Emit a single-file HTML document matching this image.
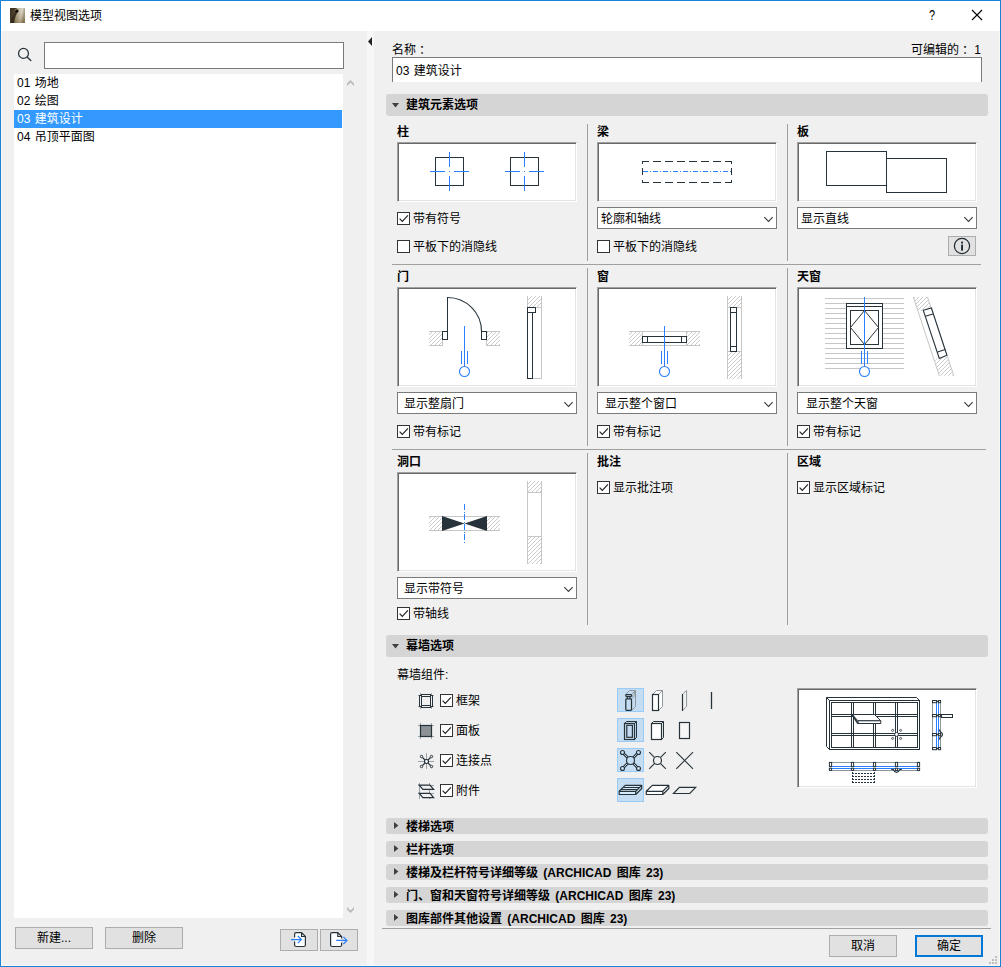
<!DOCTYPE html>
<html lang="zh-CN">
<head>
<meta charset="utf-8">
<title>模型视图选项</title>
<style>
*{box-sizing:border-box;margin:0;padding:0}
html,body{width:1001px;height:967px;overflow:hidden;background:#f0f0f0}
body{font-family:"Liberation Sans","Noto Sans CJK SC",sans-serif;font-size:12px;color:#000;position:relative;line-height:16px}
div,svg{position:absolute}
#frame{left:0;top:0;width:1001px;height:967px;border:1px solid #1883d7;z-index:50}
#title{left:1px;top:1px;width:999px;height:30px;background:#fff}
.t{white-space:nowrap;height:16px;line-height:16px}
.li{word-spacing:1px}
.fc{position:relative;left:3px}
.b{font-weight:bold}
.hdr{background:#d5d5d5;border-radius:3px;left:386px;width:602px}
.pv{background:#fff;border:1px solid;border-color:#a0a0a0 #fff #fff #a0a0a0;box-shadow:inset 1px 1px 0 #696969,inset -1px -1px 0 #e3e3e3;width:180px;overflow:hidden}
.cb{width:13px;height:13px;border:1px solid #333;background:#fff}
.dd{background:#fff;border:1px solid #7a7a7a;height:22px;width:180px}
.btn{background:#e1e1e1;border:1px solid #adadad;text-align:center}
.vs{width:1px;background:#a0a0a0}
.hs{height:1px;background:#a0a0a0}
</style>
</head>
<body>
<!-- TITLE BAR -->
<div id="title"></div>
<svg style="left:10px;top:8px" width="15" height="15" viewBox="0 0 15 15"><defs><linearGradient id="ig" x1="0" y1="0" x2="1" y2="0.15"><stop offset="0" stop-color="#3d321f"/><stop offset=".35" stop-color="#7a6a48"/><stop offset=".62" stop-color="#b9ad92"/><stop offset=".8" stop-color="#d6cdbb"/><stop offset="1" stop-color="#8f8163"/></linearGradient><linearGradient id="ig2" x1="0" y1="0" x2="0" y2="1"><stop offset="0" stop-color="#fff" stop-opacity=".25"/><stop offset="1" stop-color="#6a5628" stop-opacity=".45"/></linearGradient></defs><rect width="15" height="15" fill="url(#ig)"/><rect width="15" height="15" fill="url(#ig2)"/><path d="M0 0L7 0C3.5 2.5 1.2 8 0 14Z" fill="#3a2f1e" opacity=".9"/><path d="M0 15C1.2 8.5 3.5 3.5 6.6 1.6L8.6 3.2C6 6 4.6 10 4.2 15Z" fill="#2b2217" opacity=".85"/><path d="M5.5 2.6a1.6 1.3 -30 1 0 2.8 1a1.6 1.3 -30 1 0 -2.8 -1" fill="#120d08"/></svg>
<div class="t" style="left:30px;top:8px">模型视图选项</div>
<div class="t" style="left:929px;top:7px;font-size:14px;transform:scaleX(.78);transform-origin:0 0">?</div>
<svg style="left:971px;top:9px" width="12" height="12" viewBox="0 0 12 12"><path d="M1 1 L11 11 M11 1 L1 11" stroke="#000" stroke-width="1.1" fill="none"/></svg>

<!-- LEFT PANEL -->
<svg style="left:12px;top:40px" width="30" height="30" viewBox="12 40 30 30" fill="none"><circle cx="23.5" cy="53.4" r="4.95" stroke="#27333b" stroke-width="1.25"/><path d="M27.3 57.3L30.8 60.6" stroke="#27333b" stroke-width="1.35" stroke-linecap="round"/></svg>
<div style="left:44px;top:42px;width:300px;height:27px;background:#fff;border:1px solid #7a7a7a"></div>
<div style="left:14px;top:74px;width:329px;height:844px;background:#fff"></div>
<div class="t li" style="left:17px;top:75px">01 场地</div>
<div class="t li" style="left:17px;top:93px">02 绘图</div>
<div style="left:14px;top:110px;width:328px;height:18px;background:#3399ff"></div>
<div class="t li" style="left:17px;top:111px;color:#fff">03 建筑设计</div>
<div class="t li" style="left:17px;top:129px">04 吊顶平面图</div>
<svg style="left:346px;top:79px" width="9" height="8" viewBox="346 79 9 8"><path d="M347 83.6L350.5 80.1L354 83.6L354 86L350.5 82.5L347 86Z" fill="#b9b9b9"/></svg>
<svg style="left:346px;top:906px" width="9" height="8" viewBox="346 906 9 8"><path d="M347 909.4L350.5 912.9L354 909.4L354 907L350.5 910.5L347 907Z" fill="#b9b9b9"/></svg>
<div class="btn t" style="left:15px;top:927px;width:78px;height:22px;line-height:20px">新建...</div>
<div class="btn t" style="left:105px;top:927px;width:78px;height:22px;line-height:20px">删除</div>
<div class="btn" style="left:280px;top:929px;width:38px;height:22px"><svg style="left:-1px;top:-1px" width="38" height="22" viewBox="280 929 38 22" fill="none"><path d="M294.6 937.6L294.6 934.2Q294.6 932.7 296.1 932.7L301.6 932.7L305.4 936.5L305.4 945Q305.4 946.5 303.9 946.5L296.1 946.5Q294.6 946.5 294.6 945L294.6 941.6Z" fill="#fff"/><path d="M294.6 937.6L294.6 934.2Q294.6 932.7 296.1 932.7L301.6 932.7L305.4 936.5L305.4 945Q305.4 946.5 303.9 946.5L296.1 946.5Q294.6 946.5 294.6 945L294.6 941.6M301.6 932.7L301.6 936.5L305.4 936.5" stroke="#27333b" stroke-width="1.2"/><path d="M291 939.6L301.2 939.6M297.8 936L301.4 939.6L297.8 943.2" stroke="#2a7fff" stroke-width="1.2"/></svg></div>
<div class="btn" style="left:320px;top:929px;width:38px;height:22px"><svg style="left:-1px;top:-1px" width="38" height="22" viewBox="320 929 38 22" fill="none"><path d="M341.6 938.4L341.6 936.5L337.8 932.7L332.1 932.7Q330.6 932.7 330.6 934.2L330.6 945Q330.6 946.5 332.1 946.5L340.1 946.5Q341.6 946.5 341.6 945L341.6 942.4Z" fill="#fff"/><path d="M341.6 938.4L341.6 936.5L337.8 932.7L332.1 932.7Q330.6 932.7 330.6 934.2L330.6 945Q330.6 946.5 332.1 946.5L340.1 946.5Q341.6 946.5 341.6 945L341.6 942.4M337.8 932.7L337.8 936.5L341.6 936.5" stroke="#27333b" stroke-width="1.2"/><path d="M336.2 940.4L346.8 940.4M343.4 936.8L347 940.4L343.4 944" stroke="#2a7fff" stroke-width="1.2"/></svg></div>

<!-- SPLITTER -->
<div style="left:367px;top:31px;width:7px;height:935px;background:#f7f7f7"></div>
<svg style="left:367px;top:36px" width="6" height="11" viewBox="0 0 6 11"><path d="M5 1 L5 10 L1 5.5 Z" fill="#222"/></svg>

<!-- RIGHT PANEL -->

<svg width="0" height="0" style="left:0;top:0"><defs>
<pattern id="hat" width="4" height="4" patternUnits="userSpaceOnUse"><path d="M-1 1L1 -1M0 4L4 0M3 5L5 3" stroke="#c6c6c6" stroke-width=".9" fill="none"/></pattern>
</defs></svg>

<div class="t" style="left:392px;top:42px">名称<span class="fc">：</span></div>
<div class="t" style="left:909px;top:42px;width:72px;text-align:right">可编辑的<span class="fc">：</span> 1</div>
<div style="left:392px;top:57px;width:590px;height:25px;background:#fff;border:1px solid #7a7a7a;border-bottom:none"></div>
<div class="t" style="left:396px;top:63px;word-spacing:1px">03 建筑设计</div>

<!-- SECTION 1 -->
<div class="hdr" style="top:94px;height:22px"></div>
<svg style="left:392px;top:103px" width="7" height="5" viewBox="0 0 7 5"><path d="M0 0L7 0L3.5 4.5Z" fill="#404040"/></svg>
<div class="t b" style="left:406px;top:97px">建筑元素选项</div>

<div class="hs" style="left:392px;top:264px;width:589px"></div>
<div class="hs" style="left:392px;top:449px;width:594px"></div>
<div class="vs" style="left:587px;top:124px;height:137px"></div>
<div class="vs" style="left:587px;top:268px;height:178px"></div>
<div class="vs" style="left:587px;top:453px;height:172px"></div>
<div class="vs" style="left:787px;top:124px;height:137px"></div>
<div class="vs" style="left:787px;top:268px;height:178px"></div>
<div class="vs" style="left:787px;top:453px;height:172px"></div>

<!-- row 1 -->
<div class="t b" style="left:397px;top:124px">柱</div>
<div class="pv" id="pv1" style="left:397px;top:142px;height:60px"><svg style="left:0;top:0" width="178" height="58" viewBox="398 143 178 58" fill="none" ><rect x="435.5" y="157.5" width="28" height="28" stroke="#27333b" fill="none" stroke-width="1" shape-rendering="crispEdges"/><path d="M449.5 152L449.5 167" stroke="#2a7fff" stroke-width="1" shape-rendering="crispEdges"/><path d="M449.5 176L449.5 191" stroke="#2a7fff" stroke-width="1" shape-rendering="crispEdges"/><path d="M430 171.5L445 171.5" stroke="#2a7fff" stroke-width="1" shape-rendering="crispEdges"/><path d="M454 171.5L469 171.5" stroke="#2a7fff" stroke-width="1" shape-rendering="crispEdges"/><rect x="449" y="171" width="1" height="1" fill="#2a7fff" shape-rendering="crispEdges"/><rect x="510.5" y="157.5" width="28" height="28" stroke="#27333b" fill="none" stroke-width="1" shape-rendering="crispEdges"/><path d="M524.5 152L524.5 167" stroke="#2a7fff" stroke-width="1" shape-rendering="crispEdges"/><path d="M524.5 176L524.5 191" stroke="#2a7fff" stroke-width="1" shape-rendering="crispEdges"/><path d="M505 171.5L520 171.5" stroke="#2a7fff" stroke-width="1" shape-rendering="crispEdges"/><path d="M529 171.5L544 171.5" stroke="#2a7fff" stroke-width="1" shape-rendering="crispEdges"/><rect x="524" y="171" width="1" height="1" fill="#2a7fff" shape-rendering="crispEdges"/></svg></div>
<div class="cb" style="left:397px;top:212px"><svg width="13" height="13" viewBox="0 0 13 13" style="left:-1px;top:-1px"><path d="M2.6 6.6L5.3 9.4L10.9 3.4" fill="none" stroke="#222" stroke-width="1.15"/></svg></div>
<div class="t" style="left:413px;top:211px">带有符号</div>
<div class="cb" style="left:397px;top:240px"></div>
<div class="t" style="left:413px;top:239px">平板下的消隐线</div>

<div class="t b" style="left:597px;top:124px">梁</div>
<div class="pv" id="pv2" style="left:597px;top:142px;height:60px"><svg style="left:0;top:0" width="178" height="58" viewBox="598 143 178 58" fill="none" ><path d="M642 161.5L732 161.5" stroke="#27333b" stroke-width="1" shape-rendering="crispEdges" stroke-dasharray="8 4" stroke-dashoffset="1"/><path d="M642 182.5L732 182.5" stroke="#27333b" stroke-width="1" shape-rendering="crispEdges" stroke-dasharray="8 4" stroke-dashoffset="1"/><path d="M642.5 161L642.5 164" stroke="#27333b" stroke-width="1" shape-rendering="crispEdges"/><path d="M642.5 168L642.5 175" stroke="#27333b" stroke-width="1" shape-rendering="crispEdges"/><path d="M642.5 180L642.5 183" stroke="#27333b" stroke-width="1" shape-rendering="crispEdges"/><path d="M731.5 161L731.5 164" stroke="#27333b" stroke-width="1" shape-rendering="crispEdges"/><path d="M731.5 168L731.5 175" stroke="#27333b" stroke-width="1" shape-rendering="crispEdges"/><path d="M731.5 180L731.5 183" stroke="#27333b" stroke-width="1" shape-rendering="crispEdges"/><path d="M643 171.5L731 171.5" stroke="#2a7fff" stroke-width="1" shape-rendering="crispEdges" stroke-dasharray="5 2 1 2"/></svg></div>
<div class="dd" style="left:597px;top:207px"><div class="t" style="left:3px;top:3px">轮廓和轴线</div><svg width="11" height="7" viewBox="0 0 11 7" style="left:165px;top:8px"><path d="M1.3 1.2L5.5 5.4L9.7 1.2" fill="none" stroke="#3a3a3a" stroke-width="1.1"/></svg></div>
<div class="cb" style="left:597px;top:240px"></div>
<div class="t" style="left:613px;top:239px">平板下的消隐线</div>

<div class="t b" style="left:797px;top:124px">板</div>
<div class="pv" id="pv3" style="left:797px;top:142px;height:60px"><svg style="left:0;top:0" width="178" height="58" viewBox="798 143 178 58" fill="none" ><rect x="826.5" y="151.5" width="60" height="34" stroke="#27333b" fill="none" stroke-width="1" shape-rendering="crispEdges"/><rect x="886.5" y="158.5" width="60" height="34" stroke="#27333b" fill="none" stroke-width="1" shape-rendering="crispEdges"/></svg></div>
<div class="dd" style="left:797px;top:207px"><div class="t" style="left:3px;top:3px">显示直线</div><svg width="11" height="7" viewBox="0 0 11 7" style="left:165px;top:8px"><path d="M1.3 1.2L5.5 5.4L9.7 1.2" fill="none" stroke="#3a3a3a" stroke-width="1.1"/></svg></div>
<div class="btn" style="left:948px;top:236px;width:28px;height:20px"><svg width="18" height="18" viewBox="0 0 18 18" style="left:4px;top:0px"><circle cx="9" cy="9" r="7.6" fill="none" stroke="#1d2a33" stroke-width="1.2"/><rect x="8.1" y="7.6" width="1.9" height="6" fill="#1d2a33"/><rect x="8.1" y="4.6" width="1.9" height="1.9" fill="#1d2a33"/></svg></div>

<!-- row 2 -->
<div class="t b" style="left:397px;top:269px">门</div>
<div class="pv" id="pv4" style="left:397px;top:287px;height:100px"><svg style="left:0;top:0" width="178" height="98" viewBox="398 288 178 98" fill="none" ><rect x="429" y="331" width="14" height="15" fill="url(#hat)"/><rect x="486" y="331" width="14" height="15" fill="url(#hat)"/><path d="M429 331.5L443 331.5" stroke="#c6c6c6" stroke-width="1" shape-rendering="crispEdges"/><path d="M486 331.5L500 331.5" stroke="#c6c6c6" stroke-width="1" shape-rendering="crispEdges"/><path d="M429 345.5L443 345.5" stroke="#c6c6c6" stroke-width="1" shape-rendering="crispEdges"/><path d="M486 345.5L500 345.5" stroke="#c6c6c6" stroke-width="1" shape-rendering="crispEdges"/><path d="M442.5 339L442.5 346" stroke="#c6c6c6" stroke-width="1" shape-rendering="crispEdges"/><path d="M486.5 339L486.5 346" stroke="#c6c6c6" stroke-width="1" shape-rendering="crispEdges"/><rect x="442.5" y="331.5" width="5" height="8" stroke="#27333b" fill="#fff" stroke-width="1" shape-rendering="crispEdges"/><rect x="481.5" y="331.5" width="5" height="8" stroke="#27333b" fill="#fff" stroke-width="1" shape-rendering="crispEdges"/><path d="M447.5 297L447.5 331" stroke="#27333b" stroke-width="1" shape-rendering="crispEdges"/><path d="M447.5 297.5A34 34 0 0 1 481.5 331.5" stroke="#27333b" stroke-width="1.1"/><path d="M464.5 326L464.5 366" stroke="#2a7fff" stroke-width="1" shape-rendering="crispEdges"/><path d="M461.5 351L461.5 364" stroke="#2a7fff" stroke-width="1" shape-rendering="crispEdges"/><path d="M467.5 351L467.5 364" stroke="#2a7fff" stroke-width="1" shape-rendering="crispEdges"/><circle cx="464.5" cy="371.5" r="5" stroke="#2a7fff" stroke-width="1.1" fill="#fff"/><rect x="527" y="296" width="15" height="11.5" fill="url(#hat)"/><path d="M527.5 296L527.5 308" stroke="#c6c6c6" stroke-width="1" shape-rendering="crispEdges"/><path d="M541.5 296L541.5 379" stroke="#c6c6c6" stroke-width="1" shape-rendering="crispEdges"/><path d="M532 378.5L542 378.5" stroke="#c6c6c6" stroke-width="1" shape-rendering="crispEdges"/><path d="M535 307.5L542 307.5" stroke="#c6c6c6" stroke-width="1" shape-rendering="crispEdges"/><rect x="527.5" y="312.5" width="5" height="66" stroke="#27333b" fill="#fff" stroke-width="1" shape-rendering="crispEdges"/><rect x="527.5" y="307.5" width="8" height="5" stroke="#27333b" fill="#fff" stroke-width="1" shape-rendering="crispEdges"/></svg></div>
<div class="dd" style="left:397px;top:392px"><div class="t" style="left:6px;top:3px">显示整扇门</div><svg width="11" height="7" viewBox="0 0 11 7" style="left:165px;top:8px"><path d="M1.3 1.2L5.5 5.4L9.7 1.2" fill="none" stroke="#3a3a3a" stroke-width="1.1"/></svg></div>
<div class="cb" style="left:397px;top:425px"><svg width="13" height="13" viewBox="0 0 13 13" style="left:-1px;top:-1px"><path d="M2.6 6.6L5.3 9.4L10.9 3.4" fill="none" stroke="#222" stroke-width="1.15"/></svg></div>
<div class="t" style="left:413px;top:424px">带有标记</div>

<div class="t b" style="left:597px;top:269px">窗</div>
<div class="pv" id="pv5" style="left:597px;top:287px;height:100px"><svg style="left:0;top:0" width="178" height="98" viewBox="598 288 178 98" fill="none" ><rect x="629" y="331" width="13" height="15" fill="url(#hat)"/><rect x="687" y="331" width="13" height="15" fill="url(#hat)"/><path d="M629 331.5L700 331.5" stroke="#c6c6c6" stroke-width="1" shape-rendering="crispEdges"/><path d="M629 345.5L700 345.5" stroke="#c6c6c6" stroke-width="1" shape-rendering="crispEdges"/><path d="M642.5 331L642.5 346" stroke="#c6c6c6" stroke-width="1" shape-rendering="crispEdges"/><path d="M686.5 331L686.5 346" stroke="#c6c6c6" stroke-width="1" shape-rendering="crispEdges"/><rect x="642.5" y="336.5" width="44" height="6" stroke="#27333b" fill="#fff" stroke-width="1" shape-rendering="crispEdges"/><path d="M647.5 336L647.5 343" stroke="#27333b" stroke-width="1" shape-rendering="crispEdges"/><path d="M681.5 336L681.5 343" stroke="#27333b" stroke-width="1" shape-rendering="crispEdges"/><path d="M664.5 326L664.5 366" stroke="#2a7fff" stroke-width="1" shape-rendering="crispEdges"/><path d="M661.5 351L661.5 364" stroke="#2a7fff" stroke-width="1" shape-rendering="crispEdges"/><path d="M667.5 351L667.5 364" stroke="#2a7fff" stroke-width="1" shape-rendering="crispEdges"/><circle cx="664.5" cy="371.5" r="5" stroke="#2a7fff" stroke-width="1.1" fill="#fff"/><rect x="727" y="296" width="15" height="11.5" fill="url(#hat)"/><rect x="727" y="352" width="15" height="27" fill="url(#hat)"/><path d="M727.5 296L727.5 379" stroke="#c6c6c6" stroke-width="1" shape-rendering="crispEdges"/><path d="M741.5 296L741.5 379" stroke="#c6c6c6" stroke-width="1" shape-rendering="crispEdges"/><path d="M727 307.5L742 307.5" stroke="#c6c6c6" stroke-width="1" shape-rendering="crispEdges"/><path d="M727 351.5L742 351.5" stroke="#c6c6c6" stroke-width="1" shape-rendering="crispEdges"/><rect x="730.5" y="307.5" width="6" height="44" stroke="#27333b" fill="#fff" stroke-width="1" shape-rendering="crispEdges"/><path d="M730 312.5L737 312.5" stroke="#27333b" stroke-width="1" shape-rendering="crispEdges"/><path d="M730 346.5L737 346.5" stroke="#27333b" stroke-width="1" shape-rendering="crispEdges"/></svg></div>
<div class="dd" style="left:597px;top:392px"><div class="t" style="left:7px;top:3px">显示整个窗口</div><svg width="11" height="7" viewBox="0 0 11 7" style="left:165px;top:8px"><path d="M1.3 1.2L5.5 5.4L9.7 1.2" fill="none" stroke="#3a3a3a" stroke-width="1.1"/></svg></div>
<div class="cb" style="left:597px;top:425px"><svg width="13" height="13" viewBox="0 0 13 13" style="left:-1px;top:-1px"><path d="M2.6 6.6L5.3 9.4L10.9 3.4" fill="none" stroke="#222" stroke-width="1.15"/></svg></div>
<div class="t" style="left:613px;top:424px">带有标记</div>

<div class="t b" style="left:797px;top:269px">天窗</div>
<div class="pv" id="pv6" style="left:797px;top:287px;height:100px"><svg style="left:0;top:0" width="178" height="98" viewBox="798 288 178 98" fill="none" ><path d="M825 298.5L904 298.5" stroke="#c6c6c6" stroke-width="1" shape-rendering="crispEdges"/><path d="M825 303.5L904 303.5" stroke="#c6c6c6" stroke-width="1" shape-rendering="crispEdges"/><path d="M825 308.5L904 308.5" stroke="#c6c6c6" stroke-width="1" shape-rendering="crispEdges"/><path d="M825 313.5L904 313.5" stroke="#c6c6c6" stroke-width="1" shape-rendering="crispEdges"/><path d="M825 318.5L904 318.5" stroke="#c6c6c6" stroke-width="1" shape-rendering="crispEdges"/><path d="M825 323.5L904 323.5" stroke="#c6c6c6" stroke-width="1" shape-rendering="crispEdges"/><path d="M825 328.5L904 328.5" stroke="#c6c6c6" stroke-width="1" shape-rendering="crispEdges"/><path d="M825 333.5L904 333.5" stroke="#c6c6c6" stroke-width="1" shape-rendering="crispEdges"/><path d="M825 338.5L904 338.5" stroke="#c6c6c6" stroke-width="1" shape-rendering="crispEdges"/><path d="M825 343.5L904 343.5" stroke="#c6c6c6" stroke-width="1" shape-rendering="crispEdges"/><path d="M825 348.5L904 348.5" stroke="#c6c6c6" stroke-width="1" shape-rendering="crispEdges"/><path d="M825 353.5L904 353.5" stroke="#c6c6c6" stroke-width="1" shape-rendering="crispEdges"/><path d="M825 358.5L904 358.5" stroke="#c6c6c6" stroke-width="1" shape-rendering="crispEdges"/><path d="M825 363.5L904 363.5" stroke="#c6c6c6" stroke-width="1" shape-rendering="crispEdges"/><path d="M825 368.5L904 368.5" stroke="#c6c6c6" stroke-width="1" shape-rendering="crispEdges"/><rect x="846.5" y="303.5" width="36" height="45" stroke="#27333b" fill="#fff" stroke-width="1" shape-rendering="crispEdges"/><path d="M846 306.5L883 306.5" stroke="#27333b" stroke-width="1" shape-rendering="crispEdges"/><rect x="850.5" y="310.5" width="28" height="34" stroke="#27333b" fill="none" stroke-width="1" shape-rendering="crispEdges"/><path d="M864.5 310.5L878.5 327.5L864.5 344.5L850.5 327.5Z" stroke="#27333b" stroke-width="1"/><path d="M864.5 297L864.5 366" stroke="#2a7fff" stroke-width="1" shape-rendering="crispEdges"/><path d="M861.5 351L861.5 364" stroke="#2a7fff" stroke-width="1" shape-rendering="crispEdges"/><path d="M867.5 351L867.5 364" stroke="#2a7fff" stroke-width="1" shape-rendering="crispEdges"/><circle cx="864.5" cy="371.5" r="5" stroke="#2a7fff" stroke-width="1.1" fill="#fff"/><clipPath id="sk1"><path d="M913.3 297L927.5 297L931.2 308L918.7 311.8Z"/></clipPath><clipPath id="sk2"><path d="M935 359.7L947.2 355.6L953.8 375.7L939.3 375.7Z"/></clipPath><rect x="910" y="295" width="50" height="85" fill="url(#hat)" clip-path="url(#sk1)"/><rect x="910" y="295" width="50" height="85" fill="url(#hat)" clip-path="url(#sk2)"/><path d="M913.3 297L939.3 375.7" stroke="#c6c6c6" stroke-width="1" /><path d="M927.5 297L953.8 375.7" stroke="#c6c6c6" stroke-width="1" /><path d="M923.3 310.3L931.4 308L946.9 355.3L939.3 358.5Z" stroke="#27333b" stroke-width="1.1" fill="#fff"/><path d="M925.3 316.3L932.9 314" stroke="#27333b" stroke-width="1.1" /><path d="M937.6 352L945.2 349.6" stroke="#27333b" stroke-width="1.1" /></svg></div>
<div class="dd" style="left:797px;top:392px"><div class="t" style="left:8px;top:3px">显示整个天窗</div><svg width="11" height="7" viewBox="0 0 11 7" style="left:165px;top:8px"><path d="M1.3 1.2L5.5 5.4L9.7 1.2" fill="none" stroke="#3a3a3a" stroke-width="1.1"/></svg></div>
<div class="cb" style="left:797px;top:425px"><svg width="13" height="13" viewBox="0 0 13 13" style="left:-1px;top:-1px"><path d="M2.6 6.6L5.3 9.4L10.9 3.4" fill="none" stroke="#222" stroke-width="1.15"/></svg></div>
<div class="t" style="left:813px;top:424px">带有标记</div>

<!-- row 3 -->
<div class="t b" style="left:397px;top:454px">洞口</div>
<div class="pv" id="pv7" style="left:397px;top:472px;height:100px"><svg style="left:0;top:0" width="178" height="98" viewBox="398 473 178 98" fill="none" ><rect x="429" y="516" width="13" height="15" fill="url(#hat)"/><rect x="487" y="516" width="13" height="15" fill="url(#hat)"/><path d="M429 516.5L500 516.5" stroke="#c6c6c6" stroke-width="1" shape-rendering="crispEdges"/><path d="M429 530.5L500 530.5" stroke="#c6c6c6" stroke-width="1" shape-rendering="crispEdges"/><path d="M442 516L464.5 523.5L442 531ZM487 516L464.5 523.5L487 531Z" fill="#27333b"/><path d="M464.5 504L464.5 543" stroke="#2a7fff" stroke-width="1" shape-rendering="crispEdges" stroke-dasharray="6 1.5 1 1.5"/><rect x="527" y="481" width="15" height="11.5" fill="url(#hat)"/><rect x="527" y="537" width="15" height="27" fill="url(#hat)"/><path d="M527.5 481L527.5 564" stroke="#c6c6c6" stroke-width="1" shape-rendering="crispEdges"/><path d="M541.5 481L541.5 564" stroke="#c6c6c6" stroke-width="1" shape-rendering="crispEdges"/><path d="M527 492.5L542 492.5" stroke="#c6c6c6" stroke-width="1" shape-rendering="crispEdges"/><path d="M527 536.5L542 536.5" stroke="#c6c6c6" stroke-width="1" shape-rendering="crispEdges"/></svg></div>
<div class="dd" style="left:397px;top:577px"><div class="t" style="left:6px;top:3px">显示带符号</div><svg width="11" height="7" viewBox="0 0 11 7" style="left:165px;top:8px"><path d="M1.3 1.2L5.5 5.4L9.7 1.2" fill="none" stroke="#3a3a3a" stroke-width="1.1"/></svg></div>
<div class="cb" style="left:397px;top:607px"><svg width="13" height="13" viewBox="0 0 13 13" style="left:-1px;top:-1px"><path d="M2.6 6.6L5.3 9.4L10.9 3.4" fill="none" stroke="#222" stroke-width="1.15"/></svg></div>
<div class="t" style="left:413px;top:606px">带轴线</div>

<div class="t b" style="left:597px;top:454px">批注</div>
<div class="cb" style="left:597px;top:481px"><svg width="13" height="13" viewBox="0 0 13 13" style="left:-1px;top:-1px"><path d="M2.6 6.6L5.3 9.4L10.9 3.4" fill="none" stroke="#222" stroke-width="1.15"/></svg></div>
<div class="t" style="left:613px;top:480px">显示批注项</div>

<div class="t b" style="left:797px;top:454px">区域</div>
<div class="cb" style="left:797px;top:481px"><svg width="13" height="13" viewBox="0 0 13 13" style="left:-1px;top:-1px"><path d="M2.6 6.6L5.3 9.4L10.9 3.4" fill="none" stroke="#222" stroke-width="1.15"/></svg></div>
<div class="t" style="left:813px;top:480px">显示区域标记</div>

<!-- SECTION 2 -->
<div class="hdr" style="top:635px;height:22px"></div>
<svg style="left:392px;top:644px" width="7" height="5" viewBox="0 0 7 5"><path d="M0 0L7 0L3.5 4.5Z" fill="#404040"/></svg>
<div class="t b" style="left:406px;top:638px">幕墙选项</div>
<div class="t" style="left:397px;top:667px">幕墙组件:</div>

<div class="cb" style="left:440px;top:694px"><svg width="13" height="13" viewBox="0 0 13 13" style="left:-1px;top:-1px"><path d="M2.6 6.6L5.3 9.4L10.9 3.4" fill="none" stroke="#222" stroke-width="1.15"/></svg></div>
<div class="t" style="left:456px;top:693px">框架</div>
<div class="cb" style="left:440px;top:724px"><svg width="13" height="13" viewBox="0 0 13 13" style="left:-1px;top:-1px"><path d="M2.6 6.6L5.3 9.4L10.9 3.4" fill="none" stroke="#222" stroke-width="1.15"/></svg></div>
<div class="t" style="left:456px;top:723px">面板</div>
<div class="cb" style="left:440px;top:754px"><svg width="13" height="13" viewBox="0 0 13 13" style="left:-1px;top:-1px"><path d="M2.6 6.6L5.3 9.4L10.9 3.4" fill="none" stroke="#222" stroke-width="1.15"/></svg></div>
<div class="t" style="left:456px;top:753px">连接点</div>
<div class="cb" style="left:440px;top:784px"><svg width="13" height="13" viewBox="0 0 13 13" style="left:-1px;top:-1px"><path d="M2.6 6.6L5.3 9.4L10.9 3.4" fill="none" stroke="#222" stroke-width="1.15"/></svg></div>
<div class="t" style="left:456px;top:783px">附件</div>

<div style="left:617px;top:688px;width:27px;height:24px;background:#c5ddf2;border:1px solid #99cbf5"></div>
<div style="left:617px;top:718px;width:27px;height:24px;background:#c5ddf2;border:1px solid #99cbf5"></div>
<div style="left:617px;top:748px;width:27px;height:24px;background:#c5ddf2;border:1px solid #99cbf5"></div>
<div style="left:617px;top:778px;width:27px;height:24px;background:#c5ddf2;border:1px solid #99cbf5"></div>
<svg style="left:414px;top:688px" width="24" height="120" viewBox="414 688 24 120" fill="none"><path d="M420.5 693L420.5 709" stroke="#9aa1a6" stroke-width="1" shape-rendering="crispEdges"/><path d="M431.5 693L431.5 709" stroke="#9aa1a6" stroke-width="1" shape-rendering="crispEdges"/><path d="M418 695.5L434 695.5" stroke="#9aa1a6" stroke-width="1" shape-rendering="crispEdges"/><path d="M418 706.5L434 706.5" stroke="#9aa1a6" stroke-width="1" shape-rendering="crispEdges"/><rect x="421.5" y="694.5" width="9" height="2" stroke="#27333b" fill="#f0f0f0" stroke-width="1" /><rect x="421.5" y="705.5" width="9" height="2" stroke="#27333b" fill="#f0f0f0" stroke-width="1" /><rect x="419.5" y="695.5" width="2" height="11" stroke="#27333b" fill="#f0f0f0" stroke-width="1" /><rect x="430.5" y="695.5" width="2" height="11" stroke="#27333b" fill="#f0f0f0" stroke-width="1" /><path d="M420.5 723L420.5 739" stroke="#9aa1a6" stroke-width="1" shape-rendering="crispEdges"/><path d="M431.5 723L431.5 739" stroke="#9aa1a6" stroke-width="1" shape-rendering="crispEdges"/><path d="M418 725.5L434 725.5" stroke="#9aa1a6" stroke-width="1" shape-rendering="crispEdges"/><path d="M418 736.5L434 736.5" stroke="#9aa1a6" stroke-width="1" shape-rendering="crispEdges"/><rect x="420.5" y="725.5" width="11" height="11" stroke="#27333b" fill="#8c9296" stroke-width="1.2" /><path d="M418 761.5L434 761.5" stroke="#9aa1a6" stroke-width="1" shape-rendering="crispEdges"/><path d="M426.5 753L426.5 769" stroke="#9aa1a6" stroke-width="1" shape-rendering="crispEdges"/><path d="M426.5 761.5L422.5 757.5" stroke="#27333b" stroke-width="1.2" /><circle cx="421.5" cy="756.5" r="1.2" fill="#f0f0f0" stroke="#27333b" stroke-width="1"/><path d="M426.5 761.5L422.5 765.5" stroke="#27333b" stroke-width="1.2" /><circle cx="421.5" cy="766.5" r="1.2" fill="#f0f0f0" stroke="#27333b" stroke-width="1"/><path d="M426.5 761.5L430.5 757.5" stroke="#27333b" stroke-width="1.2" /><circle cx="431.5" cy="756.5" r="1.2" fill="#f0f0f0" stroke="#27333b" stroke-width="1"/><path d="M426.5 761.5L430.5 765.5" stroke="#27333b" stroke-width="1.2" /><circle cx="431.5" cy="766.5" r="1.2" fill="#f0f0f0" stroke="#27333b" stroke-width="1"/><circle cx="426.5" cy="761.5" r="2" fill="#fff" stroke="#27333b" stroke-width="1.2"/><path d="M419.5 783L419.5 799" stroke="#9aa1a6" stroke-width="1" shape-rendering="crispEdges"/><path d="M429.5 783L429.5 799" stroke="#9aa1a6" stroke-width="1" shape-rendering="crispEdges"/><path d="M418 785.5L434 785.5" stroke="#9aa1a6" stroke-width="1" shape-rendering="crispEdges"/><path d="M418 793.5L434 793.5" stroke="#9aa1a6" stroke-width="1" shape-rendering="crispEdges"/><path d="M419.3 785.2L430 785.2L433.6 789.4000000000001L422.9 789.4000000000001Z" fill="#f0f0f0" stroke="#27333b" stroke-width="1.2" stroke-linejoin="miter"/><path d="M419.3 793.4L430 793.4L433.6 797.6L422.9 797.6Z" fill="#f0f0f0" stroke="#27333b" stroke-width="1.2" stroke-linejoin="miter"/></svg>
<svg style="left:612px;top:684px" width="110" height="122" viewBox="612 684 110 122" fill="none"><path d="M625.8 694.3L629.6 690.5L635.5 690.5L635.5 706.5L631.7 710.3M631.7 694.3L635.5 690.5M631.7 696.8L635 693.5M631.7 698.7L635.2 695.2M634.6 691L634.6 694" stroke="#8e979c" stroke-width="1"/><rect x="625.8" y="698.9" width="5.7" height="11.4" stroke="#27333b" fill="none" stroke-width="1.25" rx="0.8"/><rect x="625.8" y="694.5" width="5.7" height="2.1" stroke="#27333b" fill="none" stroke-width="1.25" rx="0.8"/><path d="M627.6 697.7L627.6 697.8" stroke="#27333b" stroke-width="1" /><path d="M627.3 696.6L627.3 698.9" stroke="#27333b" stroke-width="1" /><path d="M629.9 696.6L629.9 698.9" stroke="#27333b" stroke-width="1" /><path d="M652.5 694.5L656.5 690.5L662.5 690.5L662.5 706.5L658.5 710.5Z" fill="#fff"/><path d="M652.5 694.5L656.5 690.5L662.5 690.5L662.5 706.5L658.5 710.5M658.5 694.5L662.5 690.5" stroke="#8e979c" stroke-width="1"/><rect x="652.5" y="694.5" width="6" height="16" stroke="#27333b" fill="#fff" stroke-width="1.2" /><path d="M682.5 694.3L686.6 690.4L686.6 706.5L682.5 710.6" stroke="#8e979c" stroke-width="1"/><path d="M682.5 694L682.5 711" stroke="#27333b" stroke-width="1.2" /><path d="M711.5 692L711.5 709" stroke="#27333b" stroke-width="1.3" /><path d="M624.5 723.5L626.5 721.5L636.5 721.5L636.5 737.5L634.5 739.5M634.5 723.5L636.5 721.5" stroke="#27333b" stroke-width="1"/><rect x="624.5" y="723.5" width="10" height="16" stroke="#27333b" fill="none" stroke-width="1.2" /><rect x="626.8" y="725.3" width="5.6" height="12" stroke="#27333b" fill="none" stroke-width="1.2" /><path d="M651.5 723.5L653.5 721.5L663.5 721.5L663.5 737.5L661.5 739.5M661.5 723.5L663.5 721.5" stroke="#27333b" stroke-width="1"/><rect x="651.5" y="723.5" width="10" height="16" stroke="#27333b" fill="#fff" stroke-width="1.2" /><rect x="679.5" y="722.5" width="10" height="16" stroke="#27333b" fill="#f6f6f6" stroke-width="1.2" /><path d="M630.5 760.5L622.5 752.5" stroke="#27333b" stroke-width="2.6" /><path d="M630.5 760.5L622.5 752.5" stroke="#c5ddf2" stroke-width="0.9" /><path d="M630.5 760.5L622.5 768.5" stroke="#27333b" stroke-width="2.6" /><path d="M630.5 760.5L622.5 768.5" stroke="#c5ddf2" stroke-width="0.9" /><path d="M630.5 760.5L638.5 752.5" stroke="#27333b" stroke-width="2.6" /><path d="M630.5 760.5L638.5 752.5" stroke="#c5ddf2" stroke-width="0.9" /><path d="M630.5 760.5L638.5 768.5" stroke="#27333b" stroke-width="2.6" /><path d="M630.5 760.5L638.5 768.5" stroke="#c5ddf2" stroke-width="0.9" /><circle cx="622.5" cy="752.5" r="2" fill="#c5ddf2" stroke="#27333b" stroke-width="1.1"/><circle cx="622.5" cy="768.5" r="2" fill="#c5ddf2" stroke="#27333b" stroke-width="1.1"/><circle cx="638.5" cy="752.5" r="2" fill="#c5ddf2" stroke="#27333b" stroke-width="1.1"/><circle cx="638.5" cy="768.5" r="2" fill="#c5ddf2" stroke="#27333b" stroke-width="1.1"/><circle cx="630.5" cy="760.5" r="4" fill="#c5ddf2" stroke="#27333b" stroke-width="1.2"/><path d="M649.2 752.2L665.8 768.8" stroke="#27333b" stroke-width="1.1" /><path d="M665.8 752.2L649.2 768.8" stroke="#27333b" stroke-width="1.1" /><circle cx="657.5" cy="760.5" r="4" fill="#f0f0f0" stroke="#27333b" stroke-width="1.2"/><path d="M676.3 752.2L693 768.8" stroke="#27333b" stroke-width="1.1" /><path d="M693 752.2L676.3 768.8" stroke="#27333b" stroke-width="1.1" /><path d="M619.2 791.3L625.2 785.4L641.7 785.4L641.7 788.5L635.7 794.5L619.2 794.5Z" fill="#d6ebfb"/><path d="M619.2 791.3L625.2 785.4L641.7 785.4L641.7 788.5L635.7 794.5L619.2 794.5ZM619.2 791.3L635.7 791.3L641.7 785.4M635.7 791.3L635.7 794.5" stroke="#27333b" stroke-width="1.2" stroke-linejoin="round"/><path d="M621.3 789.5L637.8 789.5M623.3 787.5L639.8 787.5" stroke="#27333b" stroke-width="1"/><path d="M646.3 791.3L652.3 785.4L668.8 785.4L668.8 788.5L662.8 794.5L646.3 794.5Z" fill="#fff"/><path d="M646.3 791.3L652.3 785.4L668.8 785.4L668.8 788.5L662.8 794.5L646.3 794.5ZM646.3 791.3L662.8 791.3L668.8 785.4M662.8 791.3L662.8 794.5" stroke="#27333b" stroke-width="1.2" stroke-linejoin="round"/><path d="M673.5 793.5L689.8 793.5L695.7 787.4L679.4 787.4Z" stroke="#27333b" stroke-width="1.2"/></svg>

<div class="pv" id="pv8" style="left:797px;top:688px;height:100px"><svg style="left:0;top:0" width="178" height="98" viewBox="798 689 178 98" fill="none" ><path d="M829.5 700.5L826.5 697.5L916.5 697.5L919.5 700.5M826.5 697.5L826.5 746.5L829.5 749.5" stroke="#27333b" stroke-width="1"/><rect x="829.5" y="700.5" width="90" height="49" stroke="#27333b" fill="#fff" stroke-width="1" shape-rendering="crispEdges"/><rect x="831.5" y="702.5" width="86" height="45" stroke="#27333b" fill="none" stroke-width="1" shape-rendering="crispEdges"/><path d="M851.5 702L851.5 748" stroke="#27333b" stroke-width="1" shape-rendering="crispEdges"/><path d="M853.5 702L853.5 748" stroke="#27333b" stroke-width="1" shape-rendering="crispEdges"/><path d="M873.5 702L873.5 748" stroke="#27333b" stroke-width="1" shape-rendering="crispEdges"/><path d="M875.5 702L875.5 748" stroke="#27333b" stroke-width="1" shape-rendering="crispEdges"/><path d="M895.5 702L895.5 748" stroke="#27333b" stroke-width="1" shape-rendering="crispEdges"/><path d="M897.5 702L897.5 748" stroke="#27333b" stroke-width="1" shape-rendering="crispEdges"/><path d="M831 714.5L918 714.5" stroke="#27333b" stroke-width="1" shape-rendering="crispEdges"/><path d="M831 716.5L918 716.5" stroke="#27333b" stroke-width="1" shape-rendering="crispEdges"/><path d="M831 733.5L918 733.5" stroke="#27333b" stroke-width="1" shape-rendering="crispEdges"/><path d="M831 735.5L918 735.5" stroke="#27333b" stroke-width="1" shape-rendering="crispEdges"/><path d="M852 714.5L874.5 714.5L880.8 720.8L858 720.8Z" fill="#fff" stroke="#27333b" stroke-width="1"/><path d="M858 720.8L880.8 720.8L880.8 723.5L858 723.5Z" fill="#fff" stroke="#27333b" stroke-width="1"/><path d="M852 714.5L858 723.5" stroke="#27333b" stroke-width="1.6"/><circle cx="896.6" cy="734.4" r="2" fill="#fff" stroke="#27333b" stroke-width="1"/><circle cx="892.6" cy="730.4" r="1" fill="#fff" stroke="#27333b" stroke-width=".8"/><circle cx="892.6" cy="738.4" r="1" fill="#fff" stroke="#27333b" stroke-width=".8"/><circle cx="900.6" cy="730.4" r="1" fill="#fff" stroke="#27333b" stroke-width=".8"/><circle cx="900.6" cy="738.4" r="1" fill="#fff" stroke="#27333b" stroke-width=".8"/><path d="M932.5 701L932.5 749" stroke="#8e979c" stroke-width="1" shape-rendering="crispEdges"/><path d="M940.5 701L940.5 749" stroke="#8e979c" stroke-width="1" shape-rendering="crispEdges"/><path d="M936.5 701L936.5 749" stroke="#2a7fff" stroke-width="1" shape-rendering="crispEdges"/><path d="M938.5 701L938.5 749" stroke="#2a7fff" stroke-width="1" shape-rendering="crispEdges"/><rect x="932.5" y="700.5" width="4" height="2.2" stroke="#27333b" fill="#fff" stroke-width="1" /><rect x="938.4" y="700.5" width="2.2" height="2.2" stroke="#27333b" fill="#fff" stroke-width="1" /><rect x="932.5" y="714.5" width="4" height="2.2" stroke="#27333b" fill="#fff" stroke-width="1" /><rect x="938.4" y="714.5" width="2.2" height="2.2" stroke="#27333b" fill="#fff" stroke-width="1" /><rect x="932.5" y="733.5" width="4" height="2.2" stroke="#27333b" fill="#fff" stroke-width="1" /><rect x="938.4" y="733.5" width="2.2" height="2.2" stroke="#27333b" fill="#fff" stroke-width="1" /><rect x="932.5" y="747.5" width="4" height="2.2" stroke="#27333b" fill="#fff" stroke-width="1" /><rect x="938.4" y="747.5" width="2.2" height="2.2" stroke="#27333b" fill="#fff" stroke-width="1" /><path d="M936.5 701.5L938.5 701.5" stroke="#27333b" stroke-width="1.4" /><path d="M936.5 715.5L938.5 715.5" stroke="#27333b" stroke-width="1.4" /><path d="M936.5 734.5L938.5 734.5" stroke="#27333b" stroke-width="1.4" /><path d="M936.5 748.5L938.5 748.5" stroke="#27333b" stroke-width="1.4" /><rect x="941.5" y="714.5" width="11" height="3" stroke="#27333b" fill="#fff" stroke-width="1" shape-rendering="crispEdges"/><path d="M939 729.5Q940 732 942 733.2Q943 734.5 942 735.8Q940 737 939 739.5" stroke="#27333b" stroke-width="1.2"/><path d="M829 762.5L920 762.5" stroke="#8e979c" stroke-width="1" shape-rendering="crispEdges"/><path d="M829 770.5L920 770.5" stroke="#8e979c" stroke-width="1" shape-rendering="crispEdges"/><path d="M829 766.5L920 766.5" stroke="#2a7fff" stroke-width="1" shape-rendering="crispEdges"/><path d="M829 768.5L920 768.5" stroke="#2a7fff" stroke-width="1" shape-rendering="crispEdges"/><rect x="829.4" y="762.4" width="2.2" height="4" stroke="#27333b" fill="#fff" stroke-width="1" /><rect x="829.4" y="768.2" width="2.2" height="2.2" stroke="#27333b" fill="#fff" stroke-width="1" /><rect x="851.4" y="762.4" width="2.2" height="4" stroke="#27333b" fill="#fff" stroke-width="1" /><rect x="851.4" y="768.2" width="2.2" height="2.2" stroke="#27333b" fill="#fff" stroke-width="1" /><rect x="873.4" y="762.4" width="2.2" height="4" stroke="#27333b" fill="#fff" stroke-width="1" /><rect x="873.4" y="768.2" width="2.2" height="2.2" stroke="#27333b" fill="#fff" stroke-width="1" /><rect x="895.4" y="762.4" width="2.2" height="4" stroke="#27333b" fill="#fff" stroke-width="1" /><rect x="895.4" y="768.2" width="2.2" height="2.2" stroke="#27333b" fill="#fff" stroke-width="1" /><rect x="917.4" y="762.4" width="2.2" height="4" stroke="#27333b" fill="#fff" stroke-width="1" /><rect x="917.4" y="768.2" width="2.2" height="2.2" stroke="#27333b" fill="#fff" stroke-width="1" /><path d="M852 773.5L875 773.5" stroke="#27333b" stroke-width="1" shape-rendering="crispEdges" stroke-dasharray="2 1"/><path d="M852.5 771.5L852.5 773.5" stroke="#27333b" stroke-width="1" shape-rendering="crispEdges"/><path d="M874.5 771.5L874.5 773.5" stroke="#27333b" stroke-width="1" shape-rendering="crispEdges"/><path d="M852 776.5L875 776.5" stroke="#27333b" stroke-width="1" shape-rendering="crispEdges" stroke-dasharray="2 1"/><path d="M852.5 774.5L852.5 776.5" stroke="#27333b" stroke-width="1" shape-rendering="crispEdges"/><path d="M874.5 774.5L874.5 776.5" stroke="#27333b" stroke-width="1" shape-rendering="crispEdges"/><path d="M852 779.5L875 779.5" stroke="#27333b" stroke-width="1" shape-rendering="crispEdges" stroke-dasharray="2 1"/><path d="M852.5 777.5L852.5 779.5" stroke="#27333b" stroke-width="1" shape-rendering="crispEdges"/><path d="M874.5 777.5L874.5 779.5" stroke="#27333b" stroke-width="1" shape-rendering="crispEdges"/><path d="M852 782.5L875 782.5" stroke="#27333b" stroke-width="1" shape-rendering="crispEdges" stroke-dasharray="2 1"/><path d="M852.5 780.5L852.5 782.5" stroke="#27333b" stroke-width="1" shape-rendering="crispEdges"/><path d="M874.5 780.5L874.5 782.5" stroke="#27333b" stroke-width="1" shape-rendering="crispEdges"/><path d="M891.3 769.3L893 769.3Q894.5 772.3 896.5 772.3Q898.5 772.3 900 769.3L901.8 769.3" stroke="#27333b" stroke-width="1.2"/></svg></div>

<!-- COLLAPSED SECTIONS -->
<div class="hdr" style="top:818px;height:16px"></div>
<div class="hdr" style="top:841px;height:16px"></div>
<div class="hdr" style="top:864px;height:16px"></div>
<div class="hdr" style="top:887px;height:16px"></div>
<div class="hdr" style="top:910px;height:16px"></div>
<svg style="left:394px;top:822px" width="5" height="7" viewBox="0 0 5 7"><path d="M0 0L4.4 3.5L0 7Z" fill="#404040"/></svg>
<svg style="left:394px;top:845px" width="5" height="7" viewBox="0 0 5 7"><path d="M0 0L4.4 3.5L0 7Z" fill="#404040"/></svg>
<svg style="left:394px;top:868px" width="5" height="7" viewBox="0 0 5 7"><path d="M0 0L4.4 3.5L0 7Z" fill="#404040"/></svg>
<svg style="left:394px;top:891px" width="5" height="7" viewBox="0 0 5 7"><path d="M0 0L4.4 3.5L0 7Z" fill="#404040"/></svg>
<svg style="left:394px;top:914px" width="5" height="7" viewBox="0 0 5 7"><path d="M0 0L4.4 3.5L0 7Z" fill="#404040"/></svg>
<div class="t b" style="left:406px;top:819px">楼梯选项</div>
<div class="t b" style="left:406px;top:842px">栏杆选项</div>
<div class="t b" style="left:406px;top:865px;word-spacing:2px">楼梯及栏杆符号详细等级 (ARCHICAD 图库 23)</div>
<div class="t b" style="left:406px;top:888px;word-spacing:2px">门、窗和天窗符号详细等级 (ARCHICAD 图库 23)</div>
<div class="t b" style="left:406px;top:911px;word-spacing:2px">图库部件其他设置 (ARCHICAD 图库 23)</div>

<div class="hs" style="left:382px;top:928px;width:609px"></div>
<div class="btn t" style="left:829px;top:935px;width:68px;height:22px;line-height:20px">取消</div>
<div class="btn t" style="left:915px;top:935px;width:68px;height:22px;line-height:18px;border:2px solid #0078d7">确定</div>

<div style="left:995px;top:956px;width:2px;height:2px;background:#bfbfbf"></div><div style="left:992px;top:959px;width:2px;height:2px;background:#bfbfbf"></div><div style="left:995px;top:959px;width:2px;height:2px;background:#bfbfbf"></div><div style="left:989px;top:962px;width:2px;height:2px;background:#bfbfbf"></div><div style="left:992px;top:962px;width:2px;height:2px;background:#bfbfbf"></div><div style="left:995px;top:962px;width:2px;height:2px;background:#bfbfbf"></div>
<div style="left:1px;top:31px;width:999px;height:935px;border:1px solid #fbf6ef;border-top:none"></div>
<div id="frame"></div>
</body>
</html>
